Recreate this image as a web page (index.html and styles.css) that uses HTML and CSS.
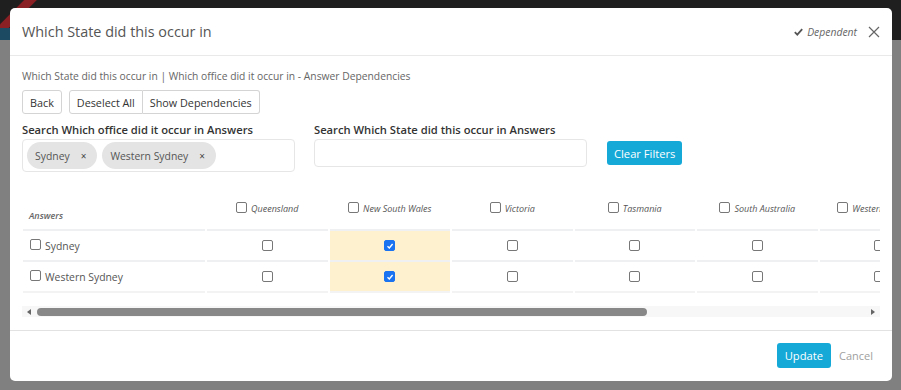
FILE: index.html
```html
<!DOCTYPE html>
<html lang="en">
<head>
  <meta charset="UTF-8" />
  <meta name="viewport" content="width=device-width, initial-scale=1.0" />
  <title>Answer Dependencies</title>
  <link rel="stylesheet" href="styles.css">
</head>
<body>
  <div class="page">
    <div class="topbar"><span class="ribbon"></span><span class="logo-bit"></span></div>
  </div>

  <div class="modal">
    <div class="modal-header">
      <h4 class="modal-title">Which State did this occur in</h4>
      <span class="dep">
        <svg width="9" height="8" viewBox="0 0 9 8"><path d="M0.8 4.2 L3.3 6.6 L8.2 1.2" fill="none" stroke="#555" stroke-width="1.8"/></svg>
        Dependent
      </span>
      <button type="button" class="close">
        <svg width="12" height="12" viewBox="0 0 12 12"><path d="M1 1 L11 11 M11 1 L1 11" stroke="#666" stroke-width="1.2"/></svg>
      </button>
    </div>

    <div class="modal-body">
      <p class="crumb">Which State did this occur in | Which office did it occur in - Answer Dependencies</p>

      <div class="toolbar">
        <button type="button" class="btn">Back</button>
        <div class="btn-group">
          <button type="button" class="btn">Deselect All</button>
          <button type="button" class="btn">Show Dependencies</button>
        </div>
      </div>

      <div class="filters">
        <div class="filter">
          <label>Search Which office did it occur in Answers</label>
          <div class="tagbox">
            <span class="tag">Sydney <span class="x">×</span></span>
            <span class="tag">Western Sydney <span class="x">×</span></span>
          </div>
        </div>
        <div class="filter">
          <label>Search Which State did this occur in Answers</label>
          <div class="tagbox empty"></div>
        </div>
        <button type="button" class="btn-info">Clear Filters</button>
      </div>

      <div class="grid-wrap">
        <table class="grid">
          <thead>
            <tr>
              <th class="first">Answers</th>
              <th><span class="cb"></span>Queensland</th>
              <th><span class="cb"></span>New South Wales</th>
              <th><span class="cb"></span>Victoria</th>
              <th><span class="cb"></span>Tasmania</th>
              <th><span class="cb"></span>South Australia</th>
              <th><span class="cb"></span>Western Australia</th>
            </tr>
          </thead>
          <tbody>
            <tr>
              <td class="first"><span class="cb"></span>Sydney</td>
              <td><span class="cb"></span></td>
              <td class="hl"><span class="cb on"><svg width="8" height="8" viewBox="0 0 8 8"><path d="M1.5 4.2 L3.3 5.9 L6.6 2" fill="none" stroke="#fff" stroke-width="1.4"/></svg></span></td>
              <td><span class="cb"></span></td>
              <td><span class="cb"></span></td>
              <td><span class="cb"></span></td>
              <td><span class="cb"></span></td>
            </tr>
            <tr>
              <td class="first"><span class="cb"></span>Western Sydney</td>
              <td><span class="cb"></span></td>
              <td class="hl"><span class="cb on"><svg width="8" height="8" viewBox="0 0 8 8"><path d="M1.5 4.2 L3.3 5.9 L6.6 2" fill="none" stroke="#fff" stroke-width="1.4"/></svg></span></td>
              <td><span class="cb"></span></td>
              <td><span class="cb"></span></td>
              <td><span class="cb"></span></td>
              <td><span class="cb"></span></td>
            </tr>
          </tbody>
        </table>
      </div>

      <div class="hscroll">
        <span class="arrow left"></span>
        <span class="thumb"></span>
        <span class="arrow right"></span>
      </div>
    </div>

    <div class="modal-footer">
      <button type="button" class="btn-info">Update</button>
      <button type="button" class="btn-link">Cancel</button>
    </div>
  </div>
</body>
</html>
```

FILE: styles.css
```css
body {
  margin: 0;
  font-family: 'Open Sans', sans-serif;
  background: #808080;
  color: #333;
}
.page {
  height: 390px;
  overflow: hidden;
}
.topbar {
  height: 40px;
  background: #1f1f1f;
  position: relative;
  overflow: hidden;
}
.ribbon {
  position: absolute;
  left: -14px;
  top: 10px;
  width: 60px;
  height: 9px;
  background: #8a1f24;
  transform: rotate(-45deg);
}
.logo-bit {
  position: absolute;
  left: 0;
  top: 28px;
  width: 10px;
  height: 12px;
  background: #1c4a63;
}

/* modal */
.modal {
  position: absolute;
  left: 10px;
  top: 8px;
  width: 882px;
  height: 373px;
  background: #fff;
  border-radius: 5px;
  display: flex;
  flex-direction: column;
}
.modal-header {
  height: 47px;
  border-bottom: 1px solid #e9e9e9;
  display: flex;
  align-items: center;
  padding: 0 12px;
}
.modal-title {
  margin: 0;
  flex: 1;
  font-size: 14.4px;
  font-weight: normal;
  color: #555;
}
.dep {
  font-size: 10.4px;
  font-style: italic;
  color: #666;
  display: flex;
  align-items: center;
  gap: 4px;
  margin-right: 11px;
}
.close {
  border: none;
  background: none;
  padding: 0;
  width: 12px;
  height: 12px;
  display: flex;
}

.modal-body {
  padding: 12px 12px 13px;
  border-bottom: 1px solid #e2e2e2;
}
.crumb {
  margin: 0 0 6px;
  font-size: 10.3px;
  line-height: 16px;
  color: #666;
}
.toolbar {
  display: flex;
  gap: 7px;
}
.btn {
  height: 24px;
  border: 1px solid #d4d4d4;
  border-radius: 3px;
  background: #fff;
  font-family: inherit;
  font-size: 10.8px;
  color: #333;
  padding: 0 7px;
}
.btn-group {
  display: flex;
}
.btn-group .btn:first-child {
  border-radius: 3px 0 0 3px;
}
.btn-group .btn:last-child {
  border-radius: 0 3px 3px 0;
  border-left: none;
}

.filters {
  display: flex;
  align-items: flex-start;
  gap: 19px;
  margin-top: 8px;
}
.filter label {
  display: block;
  font-size: 11.2px;
  line-height: 16px;
  font-weight: 600;
  color: #333;
  margin-bottom: 1px;
}
.tagbox {
  width: 273px;
  box-sizing: border-box;
  border: 1px solid #e6e6e6;
  border-radius: 4px;
  padding: 2px 4px;
  display: flex;
  gap: 5px;
}
.tagbox.empty {
  height: 28px;
}
.tag {
  height: 27px;
  box-sizing: border-box;
  display: flex;
  align-items: center;
  padding: 0 11px 0 8px;
  background: #e4e4e4;
  border-radius: 14px;
  font-size: 10.4px;
  color: #555;
}
.tag .x {
  font-size: 10px;
  color: #444;
  margin-left: 11px;
}
.btn-info {
  height: 24px;
  border: none;
  border-radius: 3px;
  background: #15a9d8;
  color: #fff;
  font-family: inherit;
  font-size: 11.2px;
  padding: 0 7px;
}
.filters .btn-info {
  margin-top: 19px;
  margin-left: 1px;
}

/* dependency grid */
.grid-wrap {
  overflow: hidden;
  margin-top: 23px;
}
.grid {
  border-collapse: separate;
  border-spacing: 2px 0;
  table-layout: fixed;
  width: 911px;
  margin-left: -1px;
}
.grid th {
  width: 120.5px;
  height: 34px;
  box-sizing: border-box;
  padding: 7px 0 0;
  vertical-align: top;
  text-align: center;
  font-size: 9px;
  line-height: 13px;
  font-style: italic;
  font-weight: normal;
  color: #555;
  white-space: nowrap;
  overflow: hidden;
}
.grid th.first {
  width: 182px;
  text-align: left;
  vertical-align: bottom;
  padding: 0 0 7px 6px;
  font-weight: 600;
  color: #666;
}
.grid th .cb {
  margin-right: 4px;
  vertical-align: -2px;
}
.grid td {
  height: 31px;
  box-sizing: border-box;
  padding: 0;
  line-height: 14px;
  border-top: 2px solid #eff0f1;
  text-align: center;
  vertical-align: middle;
  font-size: 10.4px;
  color: #555;
}
.grid tbody tr:last-child td {
  height: 33px;
  border-bottom: 2px solid #f3f3f3;
}
.grid td.first {
  text-align: left;
  padding-left: 7px;
}
.grid td.first .cb {
  margin-right: 4px;
  vertical-align: -1px;
}
.grid td.hl {
  background: #fdf1cf;
}
.cb {
  display: inline-block;
  width: 9px;
  height: 9px;
  border: 1px solid #777;
  border-radius: 2px;
  background: #fff;
  vertical-align: middle;
  position: relative;
  top: -1px;
}
.cb.on {
  background: #1a73f0;
  border-color: #1a73f0;
}
.cb.on svg {
  display: block;
  margin: 0.5px 0 0 0.5px;
}

.hscroll {
  position: relative;
  margin-top: 13px;
  height: 11px;
  background: #f7f7f7;
}
.thumb {
  position: absolute;
  left: 15px;
  top: 2px;
  width: 610px;
  height: 8px;
  border-radius: 4px;
  background: #888;
}
.arrow {
  position: absolute;
  top: 3px;
  width: 0;
  height: 0;
  border-top: 3px solid transparent;
  border-bottom: 3px solid transparent;
}
.arrow.left {
  left: 5px;
  border-right: 4px solid #666;
}
.arrow.right {
  right: 5px;
  border-left: 4px solid #666;
}

.modal-footer {
  display: flex;
  justify-content: flex-end;
  align-items: flex-start;
  padding: 12px 12px 0;
}
.modal-footer .btn-info {
  height: 25px;
  padding: 0 8px;
}
.btn-link {
  border: none;
  background: none;
  font-family: inherit;
  font-size: 11px;
  color: #a0a0a0;
  padding: 0 7px;
  margin-left: 1px;
  height: 25px;
}
```
